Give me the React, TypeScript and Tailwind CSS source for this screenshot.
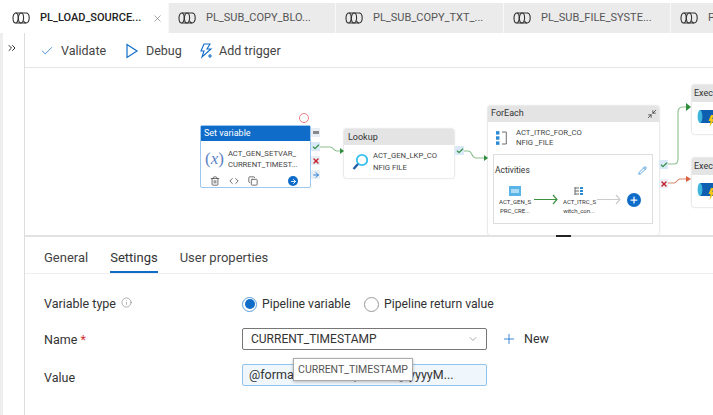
import React from "react";
import { Check, ChevronDown, ChevronsRight, Code, Copy, Info, Pencil, Plus, Trash2, X, ArrowRight, Minimize2 } from "lucide-react";

const font = { fontFamily: 'Roboto, "Noto Sans", sans-serif' };

function PipelineIcon({ className = "" }: { className?: string }) {
  return (
    <svg viewBox="0 0 18 12" width="18" height="12" className={`shrink-0 ${className}`} fill="none" stroke="#333" strokeWidth="1.1">
      <ellipse cx="3.6" cy="6" rx="2.6" ry="5" />
      <ellipse cx="9" cy="6" rx="2.6" ry="5" />
      <path d="M3.6 1h10.6M3.6 11h10.6" />
      <path d="M14 1c2.2 0 3.2 2.2 3.2 5s-1 5-3.2 5c-1.2 0-2-1-2.4-2" />
    </svg>
  );
}

function Tab({ label, active, width }: { label: string; active?: boolean; width: string }) {
  return (
    <div className={`flex h-full shrink-0 items-center border-r border-[#f8f8f8] pl-[9px] ${width} ${active ? "bg-white" : "bg-[#ebebeb]"}`}>
      <PipelineIcon />
      <span className={`ml-[10px] whitespace-nowrap text-[11px] ${active ? "font-medium text-[#222]" : "text-[#555]"}`}>{label}</span>
      {active && <X size={11} strokeWidth={1.2} className="ml-[11px] text-[#666]" />}
    </div>
  );
}

function Badge({ children, top, left, on }: { children: React.ReactNode; top: string; left: string; on?: boolean }) {
  return (
    <div className={`absolute flex h-[9px] w-[9px] items-center justify-center rounded-[1px] ${top} ${left} ${on ? "bg-[#d9e9f8]" : "bg-[#e9eef5]"}`}>
      {children}
    </div>
  );
}

function Wire({ d, color }: { d: string; color: string }) {
  return <path d={d} fill="none" stroke={color} strokeWidth="1.1" />;
}

function ExecuteNode({ top }: { top: string }) {
  return (
    <div className={`absolute left-[692px] ${top} h-[49px] w-[40px] overflow-hidden rounded-[2px] bg-white shadow-[0_0_2px_rgba(0,0,0,0.3)]`}>
      <div className="h-[17px] bg-[#e4e4e4] pl-[2px] text-[9px] leading-[17px] text-[#333]">Execu</div>
      <svg viewBox="0 0 20 20" width="20" height="20" className="ml-[5px] mt-[6px]">
        <rect x="3" y="2" width="13" height="13" fill="#0f5fb0" />
        <ellipse cx="3" cy="8.5" rx="2.4" ry="6.5" fill="#3fb6dc" />
        <path d="M14 7l-2.5 6h2l-1 6 5-8h-2.2l1.2-4z" fill="#f5c518" />
      </svg>
    </div>
  );
}

function Canvas() {
  return (
    <div className="relative h-[167px] overflow-hidden bg-white">
      {/* canvas coordinates start at x=25, y=68 of the page; nodes are free-placed */}
      <div className="absolute left-[-25px] top-[-68px] h-[415px] w-[740px]">
        {/* Set variable */}
        <div className="absolute left-[200px] top-[125px] h-[63px] w-[111px] rounded-[2px] border border-[#9cc8ef] bg-white">
          <div className="h-[15px] bg-[#0f6cc9] pl-[3px] text-[9px] leading-[15px] text-white">Set variable</div>
          <div className="flex items-center pl-[4px] pt-[4px]">
            <span className="text-[17px] leading-[28px] text-[#5b82c4]" style={{ fontFamily: '"Liberation Serif", serif' }}>
              (<i>x</i>)
            </span>
            <span className="ml-[4px] text-[7.7px] leading-[11px] text-[#444]">
              ACT_GEN_SETVAR_
              <br />
              CURRENT_TIMEST...
            </span>
          </div>
          <div className="flex items-center pl-[9px] pt-[3px] text-[#555]">
            <Trash2 size={10} />
            <Code size={10} className="ml-[9px]" />
            <Copy size={10} className="ml-[9px]" />
            <div className="ml-[30px] flex h-[10px] w-[10px] items-center justify-center rounded-full bg-[#0f6cc9]">
              <ArrowRight size={7} className="text-white" strokeWidth={3} />
            </div>
          </div>
        </div>
        <Badge top="top-[128px]" left="left-[311px]"><span className="h-[3px] w-[6px] bg-[#888]" /></Badge>
        <Badge top="top-[142px]" left="left-[311px]" on><Check size={8} strokeWidth={3.5} className="text-[#2f8f3f]" /></Badge>
        <Badge top="top-[156px]" left="left-[311px]"><X size={8} strokeWidth={4} className="text-[#c8202c]" /></Badge>
        <Badge top="top-[170px]" left="left-[311px]"><ArrowRight size={8} strokeWidth={3} className="text-[#2a7fd0]" /></Badge>

        {/* Lookup */}
        <div className="absolute left-[344px] top-[129px] h-[49px] w-[110px] overflow-hidden rounded-[2px] bg-white shadow-[0_0_2px_rgba(0,0,0,0.3)]">
          <div className="h-[16px] bg-[#e4e4e4] pl-[4px] text-[9px] leading-[16px] text-[#333]">Lookup</div>
          <div className="flex items-center pl-[8px] pt-[5px]">
            <svg viewBox="0 0 16 18" width="16" height="18" fill="none">
              <circle cx="10" cy="7" r="5.2" stroke="#35c0f0" strokeWidth="1.8" />
              <path d="M6 11l-4.5 5" stroke="#1f5fa8" strokeWidth="2.4" />
            </svg>
            <span className="ml-[5px] text-[7.7px] leading-[12px] text-[#444]">
              ACT_GEN_LKP_CO
              <br />
              NFIG FILE
            </span>
          </div>
        </div>
        <Badge top="top-[146px]" left="left-[455px]" on><Check size={8} strokeWidth={3.5} className="text-[#2f8f3f]" /></Badge>

        {/* ForEach */}
        <div className="absolute left-[488px] top-[106px] h-[129px] w-[171px] overflow-hidden rounded-[2px] bg-white shadow-[0_0_2px_rgba(0,0,0,0.3)]">
          <div className="flex h-[16px] items-center justify-between bg-[#e4e4e4] pl-[3px] pr-[2px] text-[9px] text-[#333]">
            ForEach
            <Minimize2 size={10} className="text-[#444]" />
          </div>
          <div className="flex items-center pl-[8px] pt-[6px]">
            <svg viewBox="0 0 14 16" width="12" height="16" fill="#2a8ad4">
              <rect x="0" y="0" width="4" height="4" />
              <rect x="0" y="6" width="4" height="4" />
              <rect x="0" y="12" width="4" height="4" />
              <path d="M7 1h5v14H7" fill="none" stroke="#555" strokeWidth="1" />
            </svg>
            <span className="ml-[8px] text-[7.7px] leading-[10px] text-[#444]">
              ACT_ITRC_FOR_CO
              <br />
              NFIG _FILE
            </span>
          </div>
          <div className="mx-[5px] mt-[6px] h-[70px] w-[160px] border border-[#ddd] bg-white">
            <div className="flex items-center justify-between pl-[1px] pr-[5px] pt-[9px] text-[8.5px] text-[#333]">
              Activities
              <Pencil size={9} className="text-[#2a8ad4]" />
            </div>
            <div className="flex pl-[5px] pt-[9px]">
              <div className="w-[32px] whitespace-nowrap text-center text-[6px] leading-[9px] text-[#333]">
                <svg viewBox="0 0 12 10" width="12" height="10" className="mx-auto mb-[1px]">
                  <rect width="12" height="10" fill="#5ab4e8" />
                  <path d="M2 4h8M2 6h8" stroke="#fff" strokeWidth="1" />
                </svg>
                ACT_GEN_S
                <br />
                PRC_CRE...
              </div>
              <div className="ml-[32px] w-[32px] whitespace-nowrap text-center text-[6px] leading-[9px] text-[#333]">
                <svg viewBox="0 0 12 10" width="12" height="10" className="mx-auto mb-[1px]">
                  <path d="M2 1v8M2 2h4M2 5h4M2 8h4" stroke="#666" fill="none" />
                  <rect x="7" y="1" width="3" height="2" fill="#2a8ad4" />
                  <rect x="7" y="4" width="3" height="2" fill="#2a8ad4" />
                  <rect x="7" y="7" width="3" height="2" fill="#2a8ad4" />
                </svg>
                ACT_ITRC_S
                <br />
                witch_con...
              </div>
              <div className="ml-[32px] mt-[7px] flex h-[14px] w-[14px] items-center justify-center rounded-full bg-[#0f6cc9]">
                <Plus size={10} strokeWidth={3} className="text-white" />
              </div>
            </div>
          </div>
        </div>
        <Badge top="top-[160px]" left="left-[659px]" on><Check size={8} strokeWidth={3.5} className="text-[#2f8f3f]" /></Badge>
        <Badge top="top-[179px]" left="left-[659px]"><X size={8} strokeWidth={4} className="text-[#c8202c]" /></Badge>

        <ExecuteNode top="top-[85px]" />
        <ExecuteNode top="top-[158px]" />

        {/* wires sit above the nodes */}
        <svg width="713" height="415" className="absolute left-0 top-0">
          <Wire d="M320 147h10c4 0 3 4 7 4h6" color="#8fbf8f" />
          <path d="M340 148l4 3-4 3z" fill="#2f8f3f" />
          <Wire d="M464 151h4c5 0 3 7 8 7h8" color="#8fbf8f" />
          <path d="M484 155l4 3-4 3z" fill="#2f8f3f" />
          <Wire d="M668 164h6c3 0 4-2 4-5v-47c0-3 2-5 4-5h5" color="#8fbf8f" />
          <path d="M686 103l5 4-5 4z" fill="#2f8f3f" />
          <Wire d="M668 183h6c3 0 3-4 6-4h6" color="#d98a70" />
          <path d="M686 176l5 3-5 3z" fill="#d9603c" />
          <circle cx="304" cy="118" r="4.5" fill="none" stroke="#f08080" strokeWidth="1" />
          <path d="M534 199.500h23M553 195l4 4.500-4 4.500" stroke="#3f9142" strokeWidth="1.2" fill="none" />
          <path d="M597 199.500h23M616 195l4 4.500-4 4.500" stroke="#ccc" strokeWidth="1.2" fill="none" />
        </svg>
      </div>
    </div>
  );
}

export default function App() {
  return (
    <div className="h-[415px] w-[713px] overflow-hidden bg-white pt-[3px]" style={font}>
      <div className="flex h-[30px] overflow-hidden pl-[3px]">
        <Tab label="PL_LOAD_SOURCE..." active width="w-[166px]" />
        <Tab label="PL_SUB_COPY_BLO..." width="w-[167px]" />
        <Tab label="PL_SUB_COPY_TXT_..." width="w-[168px]" />
        <Tab label="PL_SUB_FILE_SYSTE..." width="w-[167px]" />
        <Tab label="PL" width="w-[60px]" />
      </div>
      <div className="flex h-[382px]">
        <div className="w-[3px] shrink-0 bg-[#eeeeee]" />
        <div className="flex w-[22px] shrink-0 justify-center border-r border-[#dddddd] pr-[3px] pt-[9px]">
          <ChevronsRight size={12} className="text-[#333]" />
        </div>
        <div className="min-w-0 flex-1">
          <div className="flex h-[35px] items-center border-b border-[#e5e5e5] pl-[15px] pt-[2px] text-[12.5px] text-[#444]">
            <Check size={14} strokeWidth={1.3} className="text-[#0f6cc9]" />
            <span className="ml-[7px] w-[64px]">Validate</span>
            <svg viewBox="0 0 14 16" width="14" height="16" fill="none" stroke="#0f6cc9" strokeWidth="1.2">
              <path d="M2 1.500l10 6.500-10 6.500z" />
            </svg>
            <span className="ml-[7px] w-[36px]">Debug</span>
            <svg viewBox="0 0 16 16" width="16" height="16" fill="none" stroke="#0f6cc9" strokeWidth="1.1" className="ml-[16px]">
              <path d="M6 1h6L9 6h4L4 14l2-6H3z" />
              <path d="M12 11v4M10 13h4" />
            </svg>
            <span className="ml-[5px]">Add trigger</span>
          </div>
          <Canvas />
          <div className="relative h-[180px] border-t-2 border-[#e2e2e2]">
            <div className="absolute left-[531px] top-[-2px] h-[2px] w-[15px] bg-[#222]" />
            <div className="flex h-[37px] gap-[22px] border-b border-[#eeeeee] pl-[19px] text-[13px] text-[#444]">
              <span className="pt-[11px]">General</span>
              <span className="border-b-2 border-[#0f6cc9] pt-[11px] text-[#333]">Settings</span>
              <span className="pt-[11px]">User properties</span>
            </div>
            <div className="pl-[19px] pt-[18px] text-[12.5px] text-[#333]">
              <div className="flex h-[24px] items-center">
                <span className="flex w-[198px] items-center gap-[5px]">
                  Variable type <Info size={11} strokeWidth={1} className="-mt-[3px] text-[#555]" />
                </span>
                <span className="flex h-[15px] w-[15px] items-center justify-center rounded-full border border-[#5a9fdc]">
                  <span className="h-[10px] w-[10px] rounded-full bg-[#0f6cc9]" />
                </span>
                <span className="ml-[5px] w-[88px] whitespace-nowrap text-[12.2px]">Pipeline variable</span>
                <span className="ml-[14px] h-[15px] w-[15px] rounded-full border border-[#999]" />
                <span className="ml-[5px] text-[12.2px]">Pipeline return value</span>
              </div>
              <div className="mt-[12px] flex h-[22px] items-center">
                <span className="w-[198px] pt-[3px]">
                  Name <span className="text-[#d13438]">*</span>
                </span>
                <div className="flex h-[22px] w-[245px] items-center justify-between rounded-[2px] border border-[#777] pl-[8px] pr-[7px] text-[12px]">
                  CURRENT_TIMESTAMP
                  <ChevronDown size={12} strokeWidth={1} className="text-[#555]" />
                </div>
                <Plus size={16} strokeWidth={1.2} className="ml-[14px] text-[#0f6cc9]" />
                <span className="ml-[7px]">New</span>
              </div>
              <div className="relative mt-[14px] flex h-[22px] items-center">
                <span className="w-[198px] pt-[6px]">Value</span>
                <div className="flex h-[22px] w-[245px] items-center rounded-[2px] border border-[#8fc4ee] bg-[#eff6fc] pl-[6px] pt-[1px]">
                  @formatDateTime(utcnow(),'yyyyM...
                </div>
                <div className="absolute left-[249px] top-[-6px] flex h-[23px] w-[120px] items-center justify-center border border-[#aaa] bg-white text-[10.5px] text-[#555] shadow-[0_1px_3px_rgba(0,0,0,0.25)]">
                  CURRENT_TIMESTAMP
                </div>
              </div>
            </div>
          </div>
        </div>
      </div>
    </div>
  );
}
